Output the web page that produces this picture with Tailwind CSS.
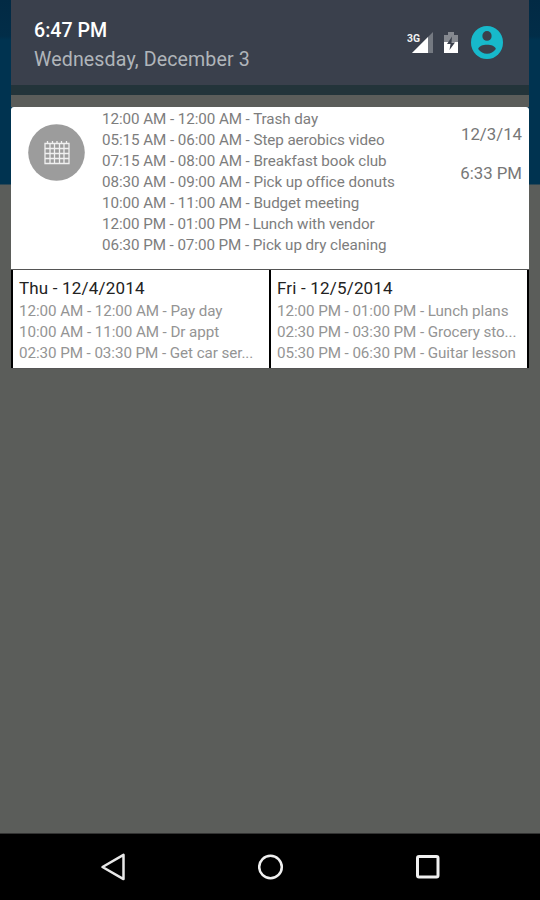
<!DOCTYPE html>
<html lang="en">
<head>
<meta charset="utf-8">
<title>Notifications</title>
<script src="https://cdn.jsdelivr.net/npm/@tailwindcss/browser@4"></script>
</head>
<body class="w-[540px] h-[900px] overflow-hidden bg-[#5b5d5a] font-[Roboto,sans-serif]">
<div class="flex flex-col w-[540px] h-[900px] bg-[linear-gradient(#022a44_0px,#022d48_36px,#003350_40px,#003350_184px,#5b5d5a_185px)]">
  <div class="flex flex-col w-[518px] ml-[11px] flex-1">
    <header class="flex h-[85px] bg-[#3a404c] pl-[23px] pr-[26px] justify-between">
      <div class="pt-[18.500px] whitespace-nowrap">
        <div class="text-[19.6px] leading-[24px] font-medium text-white">6:47 PM</div>
        <div class="text-[19.6px] leading-[24px] pt-[5px] text-[#b0b5ba] tracking-[0.12px]">Wednesday, December 3</div>
      </div>
      <div class="flex pt-[26px] items-start">
        <svg class="mt-[5px]" width="26" height="24" viewBox="0 0 26 24">
          <path d="M26 1v21H5z" fill="#747981"/>
          <path d="M21 6v16H5z" fill="#fff"/>
          <text x="0" y="11" font-family="Roboto" font-size="11" font-weight="700" fill="#f0f1f2" textLength="13" lengthAdjust="spacingAndGlyphs">3G</text>
        </svg>
        <svg class="ml-[10px] mt-[6px]" width="16" height="22" viewBox="0 0 16 22">
          <path d="M1 3h4V0h6v3h4v8H1z" fill="#858990"/>
          <path d="M1 10h14v11H1z" fill="#fff"/>
          <path d="M9 4.5L4 12h3.500l-1 6L12 10.500H8.500z" fill="#3a404c"/>
        </svg>
        <svg class="ml-[12px]" width="32" height="33" viewBox="2 2 20 20" preserveAspectRatio="none">
          <circle cx="12" cy="12" r="10" fill="#17b9cb"/>
          <ellipse cx="12" cy="8" rx="2.900" ry="3" fill="#3a404c"/>
          <path d="M6.500 16C7 12.500 17 12.500 17.500 16C15 19.800 9 19.800 6.500 16z" fill="#3a404c"/>
        </svg>
      </div>
    </header>
    <div class="h-[10px] bg-[#23343a]"></div>
    <div class="h-[12px] bg-[#5b5d5a]"></div>
    <section class="flex h-[162px] bg-white rounded-t-[3px] pl-[17px] pr-[7px]">
      <svg class="mt-[16.500px] shrink-0" width="57" height="57" viewBox="0 0 57 57">
        <circle cx="28.500" cy="28.500" r="28.300" fill="#9c9c9c"/>
        <path d="M17 19.500h24v20H17zM17 24.500h24M17 29.500h24M17 34.500h24M22 19.500v20M26.500 19.500v20M31.500 19.500v20M36 19.500v20M19.500 17v3M24.500 17v3M29 17v3M33.500 17v3M38.500 17v3" fill="none" stroke="#f0f0f0" stroke-width="1.300"/>
      </svg>
      <div class="pt-[1.900px] ml-[17px] flex-1 whitespace-nowrap text-[15.2px] tracking-[-0.07px] leading-[21.1px] text-[#7d7d7d]">
        <div>12:00 AM - 12:00 AM - Trash day</div>
        <div>05:15 AM - 06:00 AM - Step aerobics video</div>
        <div>07:15 AM - 08:00 AM - Breakfast book club</div>
        <div>08:30 AM - 09:00 AM - Pick up office donuts</div>
        <div>10:00 AM - 11:00 AM - Budget meeting</div>
        <div>12:00 PM - 01:00 PM - Lunch with vendor</div>
        <div>06:30 PM - 07:00 PM - Pick up dry cleaning</div>
      </div>
      <div class="pt-[17px] flex flex-col items-end gap-[18.500px] text-[16.8px] leading-[20px] text-[#777] whitespace-nowrap">
        <span>12/3/14</span>
        <span>6:33 PM</span>
      </div>
    </section>
    <section class="flex h-[100px] bg-white border-t border-b border-t-[#555] border-b-[#555] text-[15.2px] tracking-[-0.07px] leading-[21.1px] text-[#949494] whitespace-nowrap">
      <div class="w-[260px] border-l-2 border-r-2 border-black pl-[6px] pt-[6px]">
        <div class="text-[17px] leading-[25px] text-[#222] tracking-[0.18px]">Thu - 12/4/2014</div>
        <div>12:00 AM - 12:00 AM - Pay day</div>
        <div>10:00 AM - 11:00 AM - Dr appt</div>
        <div>02:30 PM - 03:30 PM - Get car ser...</div>
      </div>
      <div class="w-[258px] border-r-2 border-black pl-[6px] pt-[6px]">
        <div class="text-[17px] leading-[25px] text-[#222] tracking-[0.18px]">Fri - 12/5/2014</div>
        <div>12:00 PM - 01:00 PM - Lunch plans</div>
        <div>02:30 PM - 03:30 PM - Grocery sto...</div>
        <div>05:30 PM - 06:30 PM - Guitar lesson</div>
      </div>
    </section>
  </div>
  <nav class="h-[67px] bg-black border-t border-[#333] flex items-center pl-[100px] gap-[130px]">
    <svg width="28" height="28" viewBox="0 0 28 28"><path d="M2.500 14L23.500 1.900V26.100z" fill="none" stroke="#e8e8e8" stroke-width="2.500" stroke-linejoin="round"/></svg>
    <svg width="28" height="28" viewBox="0 0 28 28"><circle cx="12.500" cy="14" r="11.300" fill="none" stroke="#f0f0f0" stroke-width="2.500"/></svg>
    <svg width="28" height="28" viewBox="0 0 28 28"><rect x="1.500" y="3.500" width="20.500" height="20.500" rx="1.500" fill="none" stroke="#f0f0f0" stroke-width="3"/></svg>
  </nav>
</div>
</body>
</html>
